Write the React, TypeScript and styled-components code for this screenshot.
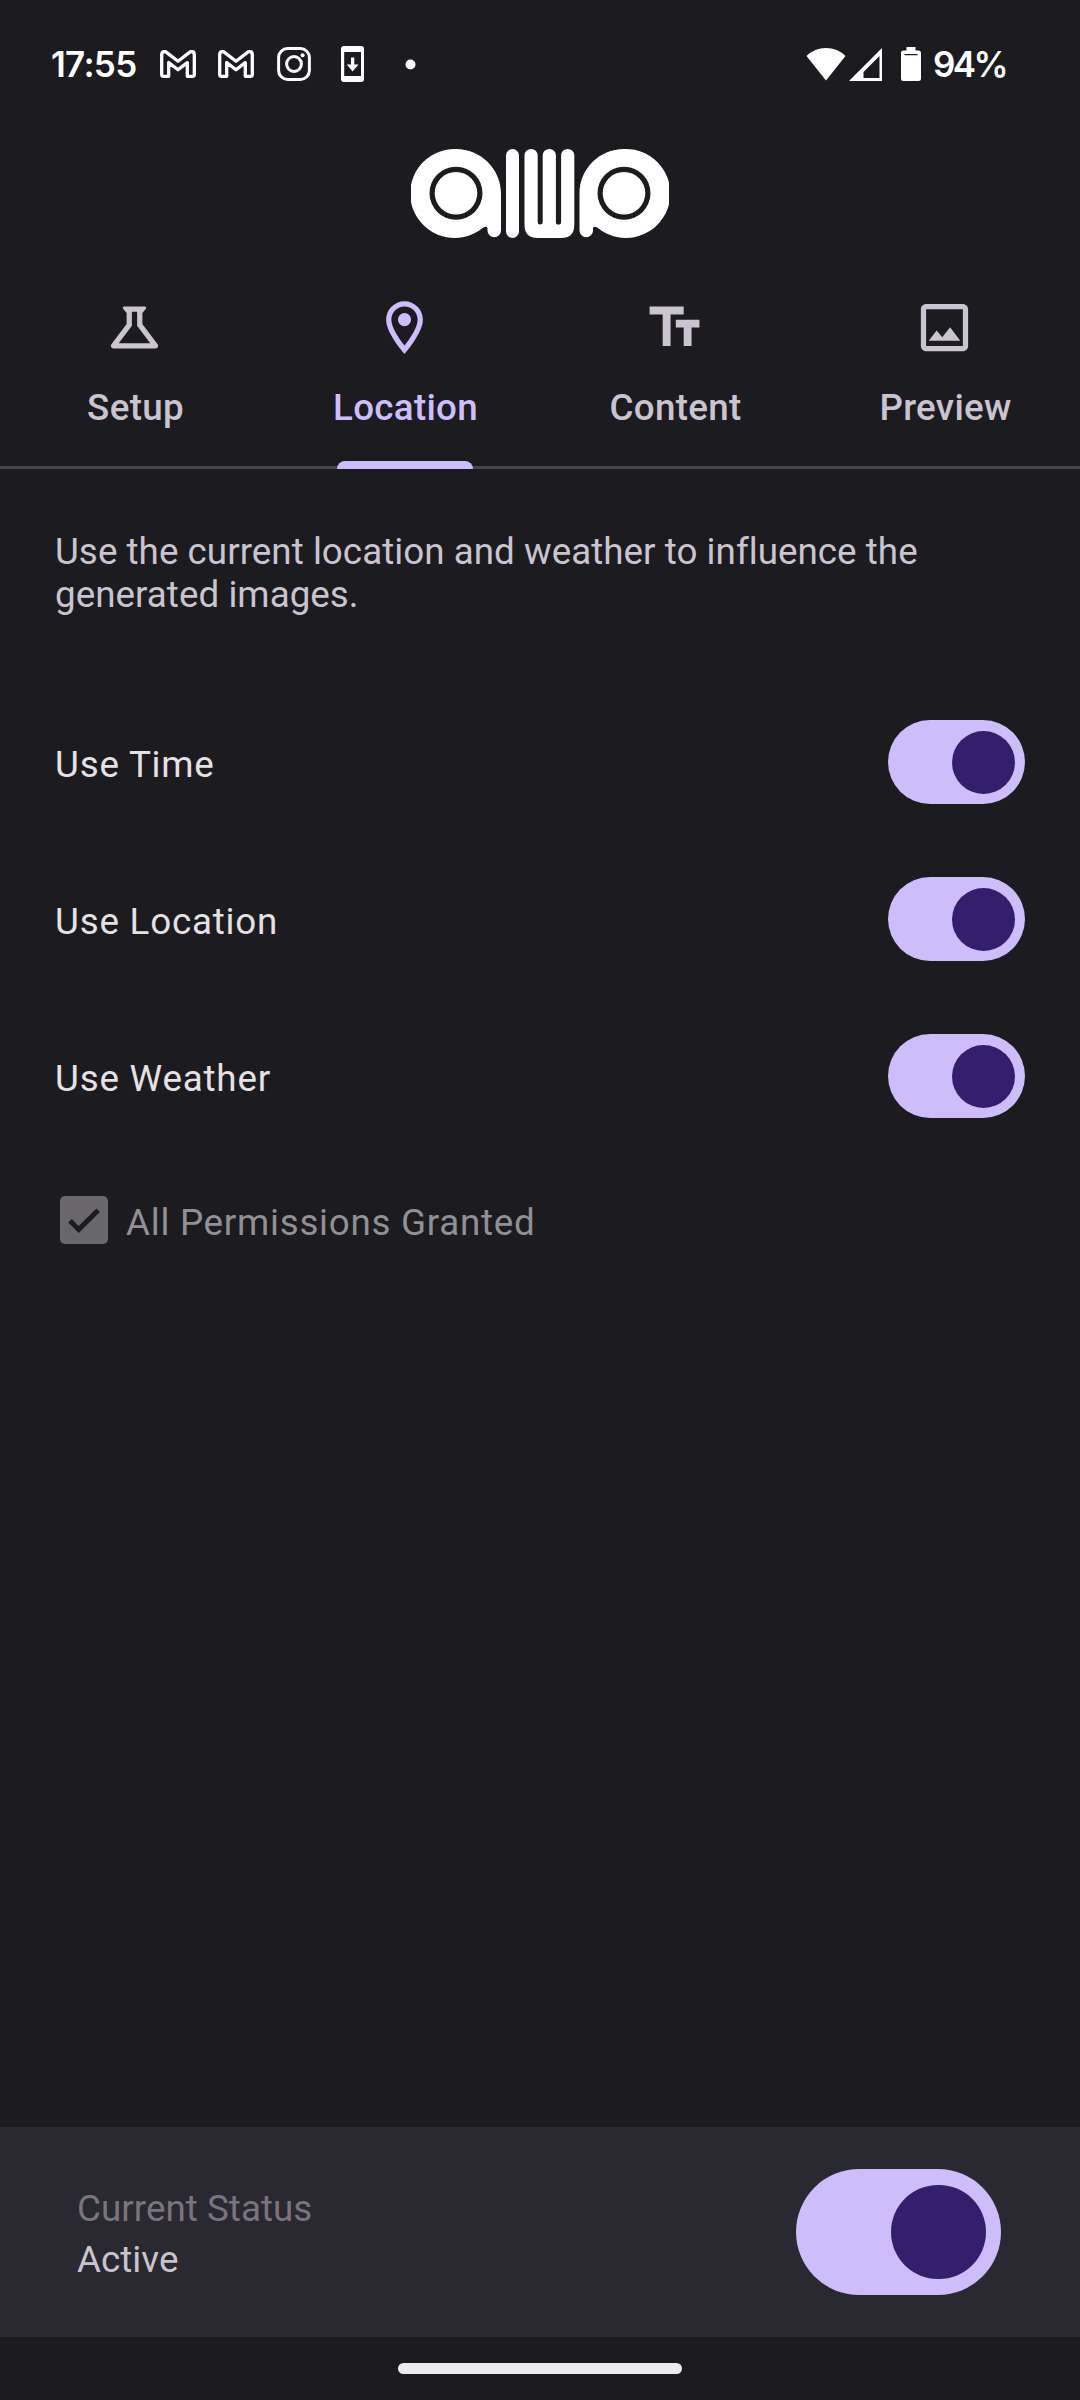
import React from 'react';
import styled, { createGlobalStyle } from 'styled-components';

const GlobalStyle = createGlobalStyle`
  * { box-sizing: border-box; }
  body { margin: 0; background: #1c1b1f; }
`;

const Screen = styled.div`
  display: flex;
  flex-direction: column;
  width: 1080px;
  height: 2400px;
  overflow: hidden;
  background: #1c1b1f;
  font-family: Roboto, 'Liberation Sans', sans-serif;
  font-size: 36.75px;
  line-height: 43px;
  letter-spacing: 0.04px;
  color: #cac4d0;
`;

const StatusBar = styled.header`
  display: flex;
  align-items: center;
  justify-content: space-between;
  height: 128px;
  padding: 0 74px 0 51px;
  color: #fff;
  svg { display: block; flex: none; }
`;

const StatusGroup = styled.div`
  display: flex;
  align-items: center;
`;

const StatusText = styled.span<{ $width: number; $spacing: number }>`
  width: ${(p) => p.$width}px;
  white-space: nowrap;
  font-family: Inter, sans-serif;
  font-weight: 600;
  font-size: 35px;
  letter-spacing: ${(p) => p.$spacing}px;
`;

const StatusIcon = styled.svg<{ $gap: number }>`
  margin-left: ${(p) => p.$gap}px;
`;

const Brand = styled.div`
  display: flex;
  justify-content: center;
  height: 168px;
  padding-top: 20px;
`;

const Tabs = styled.nav`
  display: grid;
  grid-template-columns: repeat(4, 1fr);
  height: 173px;
  border-bottom: 3px solid #49454f;
`;

const Tab = styled.button<{ $active?: boolean }>`
  display: flex;
  flex-direction: column;
  align-items: center;
  height: 173px;
  padding: 0;
  border: 0;
  background: none;
  font: inherit;
  font-weight: 500;
  letter-spacing: 0.3px;
  color: ${(p) => (p.$active ? '#cdbdfb' : '#cac4d0')};
  svg { margin-right: 1px; }
`;

const TabLabel = styled.span`
  margin: 27px 0 0 1px;
`;

const Indicator = styled.span`
  width: 136px;
  height: 8px;
  margin-top: auto;
  border-radius: 8px 8px 0 0;
  background: #cdbdfb;
`;

const Content = styled.main`
  display: flex;
  flex: 1;
  flex-direction: column;
  padding: 61px 55px 0;
`;

const Description = styled.p`
  margin: 0 0 67.5px;
`;

const SettingRow = styled.div`
  display: flex;
  align-items: center;
  justify-content: space-between;
  height: 157px;
  color: #e6e1e5;
`;

const SettingLabel = styled.span`
  margin-top: 4px;
  letter-spacing: 0.8px;
`;

const Track = styled.button<{ $scale: number }>`
  display: flex;
  align-items: center;
  justify-content: flex-end;
  width: ${(p) => 136.67 * p.$scale}px;
  height: ${(p) => 84 * p.$scale}px;
  padding: 0 ${(p) => 10.3 * p.$scale}px 0 0;
  border: 0;
  border-radius: ${(p) => 42 * p.$scale}px;
  background: #cdbdfb;
`;

const Thumb = styled.span<{ $scale: number }>`
  width: ${(p) => 63 * p.$scale}px;
  height: ${(p) => 63 * p.$scale}px;
  border-radius: 50%;
  background: #351f6c;
`;

const PermissionRow = styled.div`
  display: flex;
  align-items: center;
  height: 48px;
  margin-top: 41.5px;
  padding-left: 5px;
  color: #919094;
`;

const PermissionLabel = styled.span`
  margin: 4px 0 0 18px;
  letter-spacing: 0.74px;
`;

const StatusPanel = styled.section`
  display: flex;
  align-items: center;
  justify-content: space-between;
  height: 210px;
  padding: 0 79px 0 77px;
  background: #2a2831;
`;

const PanelText = styled.div`
  display: flex;
  flex-direction: column;
  gap: 8px;
  padding-top: 4px;
`;

const Caption = styled.span`
  color: #79747e;
`;

const GestureBar = styled.footer`
  display: flex;
  justify-content: center;
  height: 63px;
  padding-top: 26px;
`;

const GestureHandle = styled.div`
  width: 284px;
  height: 11px;
  border-radius: 5.5px;
  background: #ececec;
`;

const MailIcon = ({ gap }: { gap: number }) => (
  <StatusIcon $gap={gap} width="36" height="28" viewBox="0 0 36 28">
    <path
      d="M1.7 24.5V5Q1.7 1.5 4.4 1.5Q5.5 1.5 6.8 2.6L18 11.2L29.2 2.6Q30.5 1.5 31.6 1.5Q34.3 1.5 34.3 5V24.5Q34.3 26.3 32.5 26.3H27.3V12.6L18 19.8L8.7 12.6V26.3H3.5Q1.7 26.3 1.7 24.5Z"
      fill="none" stroke="#fff" strokeWidth="3.3" strokeLinejoin="round"
    />
  </StatusIcon>
);

const CameraIcon = () => (
  <StatusIcon $gap={23} width="34" height="34" viewBox="0 0 34 34">
    <rect x="1.6" y="1.6" width="30.8" height="30.8" rx="9" fill="none" stroke="#fff" strokeWidth="3" />
    <circle cx="17" cy="17" r="7.4" fill="none" stroke="#fff" strokeWidth="3" />
    <circle cx="25.6" cy="8.3" r="2" fill="#fff" />
  </StatusIcon>
);

const DownloadIcon = () => (
  <StatusIcon $gap={30} width="23" height="36" viewBox="0 0 23 36">
    <path
      fill="#fff" fillRule="evenodd"
      d="M3 0H20Q23 0 23 3V33Q23 36 20 36H3Q0 36 0 33V3Q0 0 3 0ZM3.2 6V30H20V6ZM10 11.5H13.3V18.5H17.5L11.6 25.5L5.8 18.5H10Z"
    />
  </StatusIcon>
);

const Logo = () => (
  <svg width="258" height="90" viewBox="0 0 258 90" fill="#fff">
    <path fillRule="evenodd" d="M45 1C69.800 1 90 21 90 45.500V82.500A6.700 6.700 0 0 1 76.500 82.500V80Q75.500 77.700 72 79.800A44.500 44.500 0 1 1 45 1ZM45 18.700A26.500 26.500 0 1 0 45 71.700A26.500 26.500 0 1 0 45 18.700Z" />
    <circle cx="45" cy="45.200" r="21.300" />
    <rect x="95" y="1" width="13" height="89" rx="6.500" />
    <path d="M113.500 7.500A6.500 6.500 0 0 1 126.700 7.500V74A2.500 2.500 0 0 0 131.700 74V7.500A6.500 6.500 0 0 1 144.900 7.500V74A2.500 2.500 0 0 0 150.100 74V7.500A6.500 6.500 0 0 1 163.300 7.500V77Q163.300 90 150 90H127Q113.500 90 113.500 77Z" />
    <g transform="matrix(-1 0 0 1 258 0)">
      <path fillRule="evenodd" d="M45 1C69.800 1 89.500 21 89.500 45.500V82.500A6.700 6.700 0 0 1 76 82.500V80Q75 77.700 71.500 79.800A44.500 44.500 0 1 1 45 1ZM45 18.700A26.500 26.500 0 1 0 45 71.700A26.500 26.500 0 1 0 45 18.700Z" />
      <circle cx="45" cy="45.200" r="21.300" />
    </g>
  </svg>
);

const TAB_ICONS: Record<string, string> = {
  Setup:
    'M13 11.33L18 18H6l5-6.67V6h2m2.960-2H8.040c-.42 0-.65.48-.39.81L9 6.500v4.170L3.200 18.400c-.49.66-.02 1.600.8 1.600h16c.82 0 1.290-.94.8-1.600L15 10.670V6.500l1.350-1.690c.26-.33.03-.81-.39-.81z',
  Location:
    'M12 2C8.130 2 5 5.130 5 9c0 5.250 7 13 7 13s7-7.750 7-13c0-3.870-3.130-7-7-7zM7 9c0-2.760 2.240-5 5-5s5 2.240 5 5c0 2.880-2.880 7.190-5 9.880C9.920 16.210 7 11.850 7 9z M12 6.500a2.500 2.500 0 1 1 0 5a2.500 2.500 0 1 1 0-5z',
  Content: 'M2.500 4v3h5v12h3V7h5V4h-13zm19 5h-9v3h3v7h3v-7h3V9z',
  Preview:
    'M19 5v14H5V5h14m0-2H5c-1.100 0-2 .9-2 2v14c0 1.100.9 2 2 2h14c1.100 0 2-.9 2-2V5c0-1.100-.9-2-2-2zm-4.860 8.860l-3 3.870L9 13.140 6 17h12l-3.860-5.140z',
};

const Toggle = ({ scale = 1 }: { scale?: number }) => (
  <Track $scale={scale} role="switch" aria-checked="true">
    <Thumb $scale={scale} />
  </Track>
);

const SETTINGS = ['Use Time', 'Use Location', 'Use Weather'];

export default function App() {
  return (
    <Screen>
      <GlobalStyle />
      <StatusBar>
        <StatusGroup>
          <StatusText $width={86} $spacing={-0.7}>17:55</StatusText>
          <MailIcon gap={23} />
          <MailIcon gap={22} />
          <CameraIcon />
          <DownloadIcon />
          <StatusIcon $gap={41} width="11" height="11" viewBox="0 0 11 11">
            <circle cx="5.500" cy="5.500" r="5" fill="#fff" />
          </StatusIcon>
        </StatusGroup>
        <StatusGroup>
          <StatusIcon $gap={0} width="40" height="34" viewBox="0 0 40 34">
            <path d="M0.500 9Q8.500 1 20 1Q31.500 1 39.500 9L20 33.500Z" fill="#fff" />
          </StatusIcon>
          <StatusIcon $gap={3} width="33" height="34" viewBox="0 0 33 34">
            <path d="M0 34L33 1V34ZM14.500 31H30.500V9L14.500 25Z" fill="#fff" fillRule="evenodd" />
          </StatusIcon>
          <StatusIcon $gap={18} width="22" height="34" viewBox="0 0 22 34">
            <path d="M6.500 0H15.500V3.500H18.500Q21 3.500 21 6V31.500Q21 34 18.500 34H3.500Q1 34 1 31.500V6Q1 3.500 3.500 3.500H6.500ZM4.500 7V8.200H17.500V7Z" fill="#fff" fillRule="evenodd" />
          </StatusIcon>
          <StatusIcon $gap={11} width="0" height="1" />
          <StatusText $width={73} $spacing={-2.6}>94%</StatusText>
        </StatusGroup>
      </StatusBar>
      <Brand>
        <Logo />
      </Brand>
      <Tabs>
        {Object.entries(TAB_ICONS).map(([name, path]) => {
          const active = name === 'Location';
          return (
            <Tab key={name} $active={active}>
              <svg width="63" height="63" viewBox="0 0 24 24" fill="currentColor">
                <path d={path} />
              </svg>
              <TabLabel>{name}</TabLabel>
              {active && <Indicator />}
            </Tab>
          );
        })}
      </Tabs>
      <Content>
        <Description>
          Use the current location and weather to influence the
          <br />
          generated images.
        </Description>
        {SETTINGS.map((label) => (
          <SettingRow key={label}>
            <SettingLabel>{label}</SettingLabel>
            <Toggle />
          </SettingRow>
        ))}
        <PermissionRow>
          <svg width="48" height="48" viewBox="0 0 48 48">
            <rect width="48" height="48" rx="5" fill="#69676c" />
            <path d="M10 24.700L18.700 33.500L38.200 14.300" fill="none" stroke="#1c1b1f" strokeWidth="5" />
          </svg>
          <PermissionLabel>All Permissions Granted</PermissionLabel>
        </PermissionRow>
      </Content>
      <StatusPanel>
        <PanelText>
          <Caption>Current Status</Caption>
          <span>Active</span>
        </PanelText>
        <Toggle scale={1.5} />
      </StatusPanel>
      <GestureBar>
        <GestureHandle />
      </GestureBar>
    </Screen>
  );
}
